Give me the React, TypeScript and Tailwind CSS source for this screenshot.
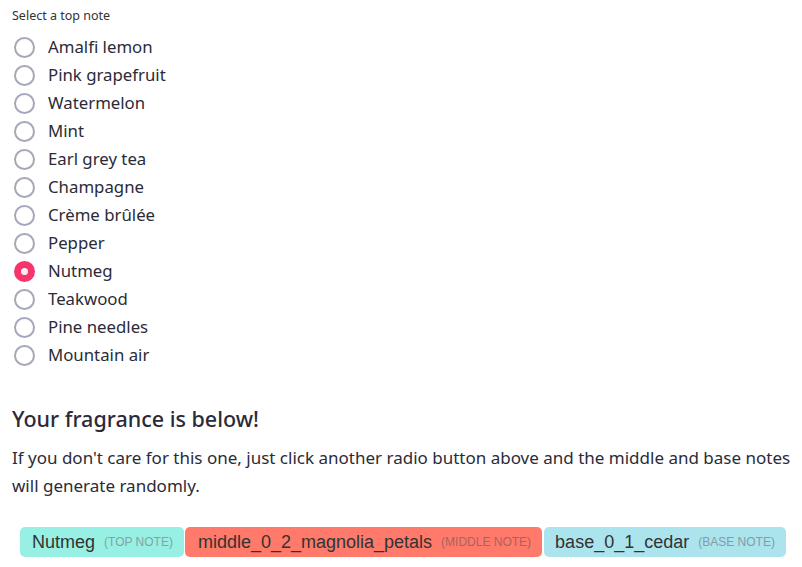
import React, { useState } from "react";

const notes = [
  "Amalfi lemon",
  "Pink grapefruit",
  "Watermelon",
  "Mint",
  "Earl grey tea",
  "Champagne",
  "Crème brûlée",
  "Pepper",
  "Nutmeg",
  "Teakwood",
  "Pine needles",
  "Mountain air",
];

export default function App() {
  const [sel, setSel] = useState("Nutmeg");
  return (
    <div
      className="bg-white min-h-[567px] pl-[12px] pr-0 pt-[7px] text-[#2b2b38]"
      style={{ fontFamily: '"Noto Sans", "Open Sans", sans-serif' }}
    >
      <div className="text-[12.5px] leading-[17px] text-[#333]">Select a top note</div>
      <div className="mt-[9px] flex flex-col">
        {notes.map((n) => {
          const checked = n === sel;
          return (
            <label
              key={n}
              className="flex items-center h-[28px] cursor-pointer"
              onClick={() => setSel(n)}
            >
              <span
                className={
                  checked
                    ? "ml-[2px] w-[21px] h-[21px] rounded-full bg-[#f7356b] flex items-center justify-center"
                    : "ml-[2px] w-[21px] h-[21px] rounded-full border-2 border-[#a5a8b8] bg-white"
                }
              >
                {checked && <span className="w-[7px] h-[7px] rounded-full bg-[#f1f1f5]" />}
              </span>
              <span className="ml-[13px] text-[16.8px] leading-[28px]">{n}</span>
            </label>
          );
        })}
      </div>
      <h2 className="mt-[35px] text-[21.5px] leading-[30px] font-medium text-[#2b2b38]">
        Your fragrance is below!
      </h2>
      <p className="mt-[10px] text-[17px] leading-[28px] text-[#2b2b38]">
        If you don't care for this one, just click another radio button above and the middle and base notes will generate randomly.
      </p>
      <div
        className="mt-[27px] ml-[8px] flex gap-[1px]"
        style={{ fontFamily: '"Liberation Sans", Arial, sans-serif' }}
      >
        <div className="h-[30px] flex items-center rounded-[5px] bg-[#98efe3] pl-[12px] pr-[11px] text-[#333]">
          <span className="text-[18px]">Nutmeg</span>
          <span className="ml-[9px] text-[12px] text-[#7fa6a0]">(TOP NOTE)</span>
        </div>
        <div className="h-[30px] flex items-center rounded-[5px] bg-[#ff7a6a] pl-[13px] pr-[11px] text-[#333]">
          <span className="text-[18px]">middle_0_2_magnolia_petals</span>
          <span className="ml-[9px] text-[12px] text-[#a8645b]">(MIDDLE NOTE)</span>
        </div>
        <div className="ml-[1px] h-[30px] flex items-center rounded-[5px] bg-[#ace4ee] pl-[11px] pr-[11px] text-[#333]">
          <span className="text-[18px]">base_0_1_cedar</span>
          <span className="ml-[9px] text-[12px] text-[#7f9ea4]">(BASE NOTE)</span>
        </div>
      </div>
    </div>
  );
}
